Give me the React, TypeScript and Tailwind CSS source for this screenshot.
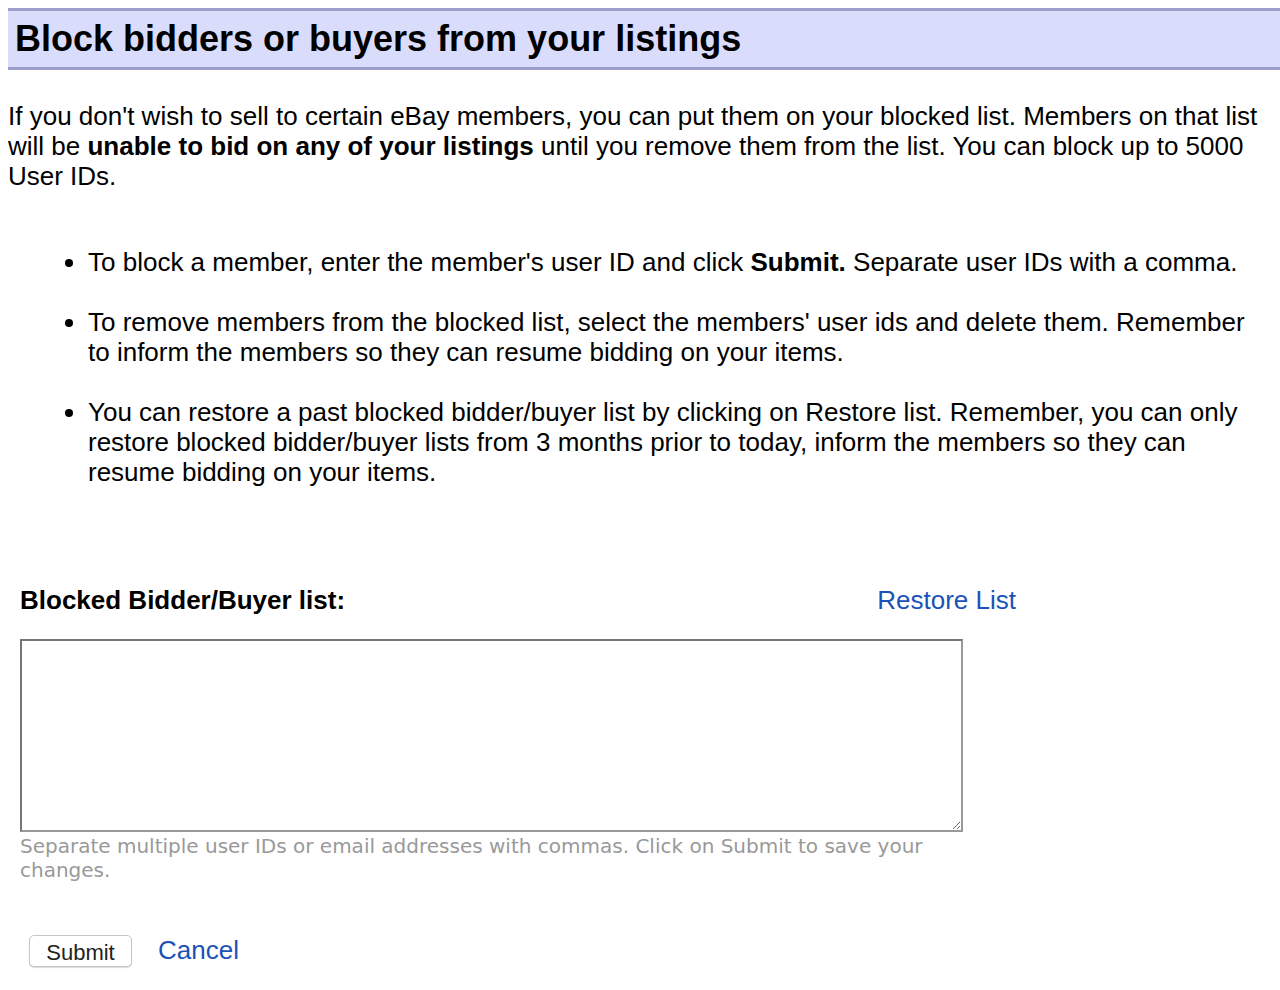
export default function App() {
  return (
    <div className="min-h-[990px] bg-white pt-2 pl-2 font-['Liberation_Sans',Arial,sans-serif] text-black">
      {/* Title bar */}
      <div className="border-y-[3px] border-[#9c9fcb] bg-[#d9dcfa] pl-[7px] h-[62px] flex items-center">
        <h1 className="text-[36px] font-bold leading-none">Block bidders or buyers from your listings</h1>
      </div>

      <p className="mt-[31px] text-[26px] leading-[30px] pr-[12px]">
        If you don't wish to sell to certain eBay members, you can put them on your blocked list. Members on that list
        will be <b>unable to bid on any of your listings</b> until you remove them from the list. You can block up to 5000
        User IDs.
      </p>

      <ul className="mt-[56px] list-disc pl-[80px] pr-[20px] text-[26px] leading-[30px]">
        <li className="mb-[30px]">
          To block a member, enter the member's user ID and click <b>Submit.</b> Separate user IDs with a comma.
        </li>
        <li className="mb-[30px]">
          To remove members from the blocked list, select the members' user ids and delete them. Remember to inform the
          members so they can resume bidding on your items.
        </li>
        <li>
          You can restore a past blocked bidder/buyer list by clicking on Restore list. Remember, you can only restore
          blocked bidder/buyer lists from 3 months prior to today, inform the members so they can resume bidding on your
          items.
        </li>
      </ul>

      <div className="mt-[98px] pl-3 w-[964px]">
        <div className="flex items-center justify-between h-[30px]">
          <span className="text-[26px] font-bold">Blocked Bidder/Buyer list:</span>
          <a href="#" className="text-[26px] text-[#1a52b8] mr-[-44px]">Restore List</a>
        </div>
        <textarea className="mt-[24px] block w-[943px] h-[193px] border-2 border-t-[#767676] border-l-[#767676] border-r-[#999] border-b-[#999] bg-white resize" />
        <p className="mt-[2px] w-[935px] font-['DejaVu_Sans',Verdana,sans-serif] text-[20px] leading-[24px] text-[#999]">
          Separate multiple user IDs or email addresses with commas. Click on Submit to save your changes.
        </p>
        <div className="mt-[49px] flex items-center gap-[26px] pl-[9px]">
          <button className="w-[103px] h-[32px] rounded-[5px] border border-[#c6c6c6] bg-white text-[22px] text-[#222] shadow-[0_1px_1px_rgba(0,0,0,0.15)] font-['Liberation_Sans',Arial,sans-serif]">
            Submit
          </button>
          <a href="#" className="text-[26px] text-[#1a52b8]">Cancel</a>
        </div>
      </div>
    </div>
  );
}
